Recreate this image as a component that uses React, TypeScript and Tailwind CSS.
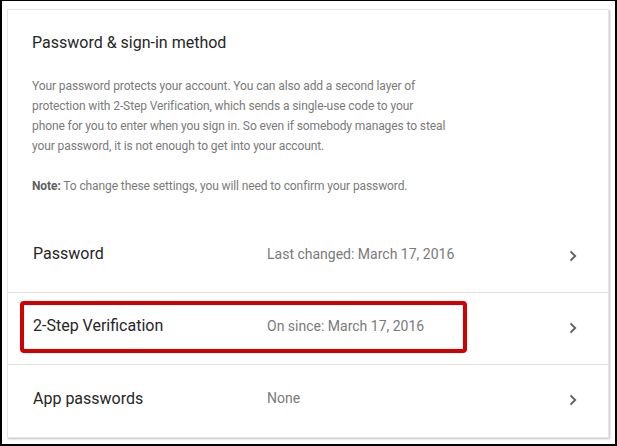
import React from "react";

function Chevron() {
  return (
    <svg width="24" height="24" viewBox="0 0 24 24" className="shrink-0">
      <path d="M9.5 7.3 L14.2 12 L9.5 16.7" fill="none" stroke="#616161" strokeWidth="1.9" />
    </svg>
  );
}

function Row({ label, value, last }: { label: string; value: string; last?: boolean }) {
  return (
    <div className={`flex h-[72px] items-center pl-[25px] pr-[23px] ${last ? "" : "border-b border-[#e0e0e0]"}`}>
      <div className="w-[234px] shrink-0 text-[16px] text-[#262626] pb-[5px]">{label}</div>
      <div className="flex-1 text-[14px] text-[#7a7a7a] pb-[5px]">{value}</div>
      <div className="pb-[2px]"><Chevron /></div>
    </div>
  );
}

export default function App() {
  return (
    <div
      className="relative h-[446px] w-[617px] overflow-hidden border-x-2 border-b-2 border-t border-black bg-white"
      style={{ fontFamily: "Roboto, 'Noto Sans', sans-serif" }}
    >
      <div className="ml-[5px] mt-[8px] h-[429px] w-[602px] border border-[#e6e6e6] bg-white shadow-[1px_1px_2px_rgba(0,0,0,0.25)]">
        <div className="px-[24px] pt-[21px]">
          <div className="text-[16px] leading-[24px] text-[#262626]">Password &amp; sign-in method</div>
          <div className="mt-[21px] text-[12px] leading-[20px] tracking-[-0.1px] text-[#7a7a7a]">
            Your password protects your account. You can also add a second layer of
            <br />
            protection with 2-Step Verification, which sends a single-use code to your
            <br />
            phone for you to enter when you sign in. So even if somebody manages to steal
            <br />
            your password, it is not enough to get into your account.
          </div>
          <div className="mt-[20px] text-[12px] leading-[20px] tracking-[-0.1px] text-[#7a7a7a]">
            <span className="font-bold text-[#5f5f5f]">Note:</span> To change these settings, you will need to confirm your password.
          </div>
        </div>
        <div className="mt-[25px]" />
        <Row label="Password" value="Last changed: March 17, 2016" />
        <Row label="2-Step Verification" value="On since: March 17, 2016" />
        <Row label="App passwords" value="None" last />
      </div>
      <div className="absolute left-[18px] top-[300px] h-[52px] w-[447px] rounded-[4px] border-[4px] border-[#d40000]" />
    </div>
  );
}
